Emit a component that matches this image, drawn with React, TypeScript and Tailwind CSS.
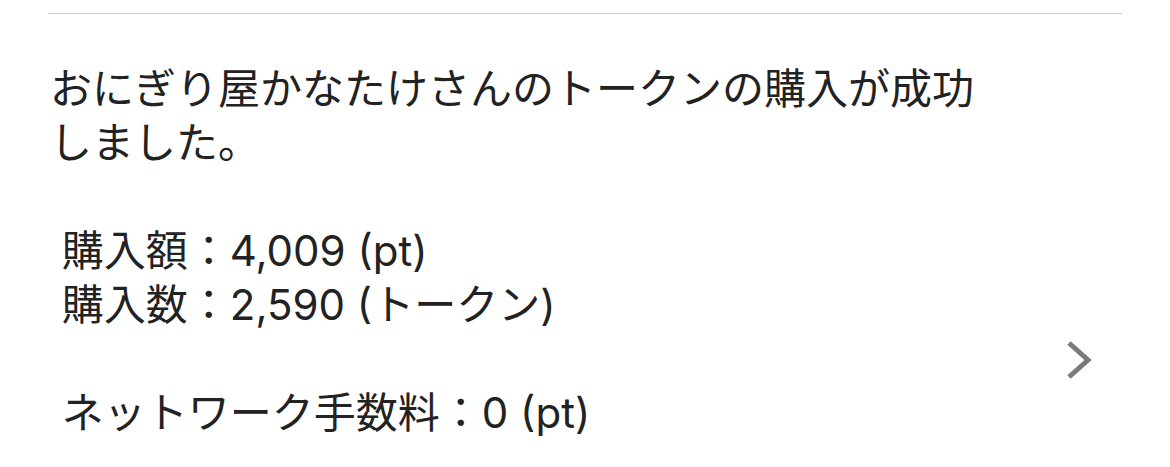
export default function App() {
  return (
    <div className="h-[467px] w-[1170px] overflow-hidden bg-white pt-[13px] font-['Inter','Noto_Sans_CJK_JP',sans-serif] text-[#222]">
      <div className="mx-[48px] border-t border-[#cccccc]" />

      <div className="flex items-start pl-[50px] pt-[48px]">
        <div className="w-[945px] text-[42px] leading-[54px]">
          <p>おにぎり屋かなたけさんのトークンの購入が成功しました。</p>
          <p className="h-[54px]" />
          <p className="whitespace-pre"> 購入額：4,009 (pt)</p>
          <p className="whitespace-pre"> 購入数：2,590 (トークン)</p>
          <p className="h-[54px]" />
          <p className="whitespace-pre"> ネットワーク手数料：0 (pt)</p>
        </div>

        <svg
          className="ml-[71px] mt-[278px] h-[40px] w-[26px] shrink-0"
          viewBox="0 0 26 40"
          fill="none"
          stroke="#7a7a7a"
          strokeWidth="5"
        >
          <path d="M3 3 L22 20 L3 37" />
        </svg>
      </div>
    </div>
  );
}
